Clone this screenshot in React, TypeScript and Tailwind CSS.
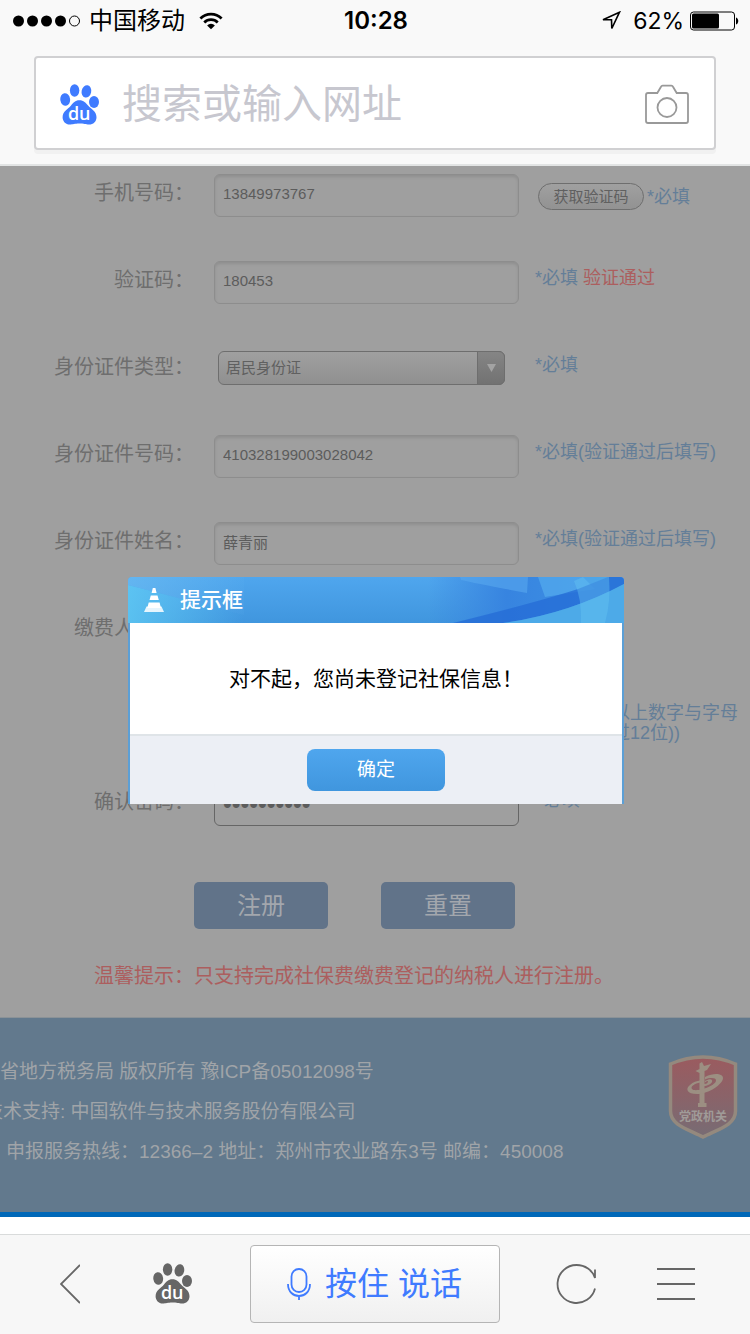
import type { ReactNode } from "react";

const SANS = "font-['Liberation_Sans','Noto_Sans_CJK_SC',sans-serif]";

const inputClass =
  "h-[43px] w-[305px] shrink-0 rounded-md border border-[#8d8d8d] bg-[#9f9f9f] px-2 pb-1 text-[15px] text-[#5c5c5c] shadow-[inset_0_2px_3px_rgba(0,0,0,0.1)] outline-none";

function Paw({ className }: { className: string }) {
  return (
    <svg className={className} viewBox="0 0 40 41" fill="currentColor" aria-hidden="true">
      <ellipse cx="5.2" cy="15.5" rx="4.9" ry="6.3" transform="rotate(-8 5.2 15.5)" />
      <ellipse cx="14.6" cy="6.5" rx="4.7" ry="6.2" />
      <ellipse cx="26.4" cy="7.4" rx="4.8" ry="6.2" transform="rotate(12 26.4 7.4)" />
      <ellipse cx="34" cy="18" rx="5" ry="6" />
      <path d="M19.3 16.2c4.500 0 6.500 2.500 9 5.500 2.700 3.200 8.200 5.500 8.200 11.500 0 4.500-3.200 7.300-7.500 7.300-3.400 0-5-1-9.700-1s-6.300 1-9.500 1c-4.200 0-7.200-3.300-7.200-7.300 0-6 5.700-8.300 8.200-11.500 2.200-3 4.500-5.500 8.500-5.500z" />
      <text
        x="19.200"
        y="36"
        textAnchor="middle"
        fill="#fff"
        fontSize="18"
        fontWeight="600"
        fontFamily="Open Sans, sans-serif"
      >
        du
      </text>
    </svg>
  );
}

function StatusBar() {
  return (
    <div className="grid h-[42px] grid-cols-[1fr_auto_1fr] items-center pr-[11px] pl-[13px] font-['Inter','Noto_Sans_CJK_SC',sans-serif] text-2xl text-black">
      <div className="flex items-center">
        <svg className="mr-2 h-3 w-[68px]" viewBox="0 0 68 12" aria-hidden="true">
          <circle cx="5.500" cy="6" r="5.500" />
          <circle cx="19.500" cy="6" r="5.500" />
          <circle cx="33.500" cy="6" r="5.500" />
          <circle cx="47.500" cy="6" r="5.500" />
          <circle cx="61.500" cy="6" r="5" fill="none" stroke="#000" />
        </svg>
        <span>中国移动</span>
        <svg className="ml-3.5 h-[18px] w-6" viewBox="0 0 26 19" fill="none" stroke="#000" aria-hidden="true">
          <path d="M1.500 6.700a16.500 16.500 0 0 1 23 0" strokeWidth="3" />
          <path d="M5.700 11a10.500 10.500 0 0 1 14.600 0" strokeWidth="3" />
          <path d="M13 18.500 8.800 14.300a6 6 0 0 1 8.400 0z" fill="#000" stroke="none" />
        </svg>
      </div>
      <span className="font-semibold">10:28</span>
      <div className="flex items-center justify-end">
        <svg className="mr-3 h-5 w-5" viewBox="0 0 20 20" fill="none" stroke="#000" strokeWidth="1.600" aria-hidden="true">
          <path d="M18.500 1.200 2 8.800h8.500l.300 8.700z" />
        </svg>
        <span className="text-[23px]">62%</span>
        <svg className="ml-1.5 h-5 w-[49px]" viewBox="0 0 49 20" aria-hidden="true">
          <rect x=".500" y="1" width="44" height="18" rx="3" fill="none" stroke="#000" />
          <rect x="2" y="2.500" width="27" height="15" rx="1.500" />
          <path d="M46 6.500c3 1 3 6 0 7z" />
        </svg>
      </div>
    </div>
  );
}

function SearchBar() {
  return (
    <div className="mx-[34px] mt-3.5 flex h-[94px] items-center rounded border-2 border-[#d0d0d2] bg-white pt-0.5 pr-[25px] pl-6 shadow-[0_4px_0_#f1f1f1]">
      <Paw className="h-[41px] w-10 shrink-0 text-[#3f7bff]" />
      <input
        type="text"
        aria-label="搜索或输入网址"
        placeholder="搜索或输入网址"
        className="mr-4 ml-[22px] h-16 min-w-0 flex-1 text-[40px] outline-none placeholder:text-[#c7c7cf]"
      />
      <button type="button" aria-label="拍照" className="shrink-0">
        <svg className="h-10 w-11" viewBox="0 0 44 40" fill="none" stroke="#999" strokeWidth="1.800" aria-hidden="true">
          <path d="M3 9h9.300l3.700-6.300q.500-1 1.600-1h8.800q1.100 0 1.600 1L31.700 9H41q2 0 2 2v26q0 2-2 2H3q-2 0-2-2V11q0-2 2-2z" />
          <circle cx="22" cy="23.500" r="9.500" />
        </svg>
      </button>
    </div>
  );
}

function Row({ label, id, children, hint }: { label: string; id: string; children: ReactNode; hint?: ReactNode }) {
  return (
    <div className="flex h-[43px]">
      <label htmlFor={id} className="w-[194px] shrink-0 text-right text-xl leading-[38px] text-[#6e6e6e]">
        {label}
      </label>
      <div className="ml-5 w-[305px] shrink-0">{children}</div>
      <div className="ml-4 min-w-0 flex-1 pt-[7px] text-lg leading-5 whitespace-nowrap text-[#647e98]">{hint}</div>
    </div>
  );
}

function Select({ id, value }: { id: string; value: string }) {
  return (
    <div className="relative mt-[3px] ml-1 h-[34px] w-[287px]">
      <select
        id={id}
        className="h-full w-full appearance-none rounded-md border border-[#6e6e6e] bg-linear-to-b from-[#a0a0a0] to-[#909090] px-[7px] text-[15px] text-[#606060] outline-none"
      >
        <option>{value}</option>
      </select>
      <span className="pointer-events-none absolute inset-y-0 right-0 flex w-7 items-center justify-center rounded-r-md border border-[#6e6e6e] bg-linear-to-b from-[#858585] to-[#727272]">
        <svg className="h-2 w-[9px]" viewBox="0 0 9 8" fill="#a3a3a3" aria-hidden="true">
          <path d="M0 0h9L4.500 8z" />
        </svg>
      </span>
    </div>
  );
}

function RegisterForm() {
  return (
    <form className="flex flex-col bg-[#9f9f9f] pt-2 pb-[26px]" onSubmit={(e) => e.preventDefault()}>
      <div className="flex flex-col gap-11">
        <Row
          id="phone"
          label="手机号码："
          hint={
            <div className="flex items-center gap-[3px] pt-0.5 pl-[3px]">
              <button
                type="button"
                className="h-[27px] w-[106px] rounded-full border border-[#6e6e6e] bg-linear-to-b from-[#a0a0a0] to-[#929292] text-[15px] leading-5 text-[#606060]"
              >
                获取验证码
              </button>
              <span>*必填</span>
            </div>
          }
        >
          <input id="phone" type="tel" defaultValue="13849973767" className={inputClass} />
        </Row>
        <Row
          id="code"
          label="验证码："
          hint={
            <>
              *必填 <span className="text-[#ac5e5e]">验证通过</span>
            </>
          }
        >
          <input id="code" type="text" defaultValue="180453" className={inputClass} />
        </Row>
        <Row id="id-type" label="身份证件类型：" hint="*必填">
          <Select id="id-type" value="居民身份证" />
        </Row>
        <Row id="id-number" label="身份证件号码：" hint="*必填(验证通过后填写)">
          <input id="id-number" type="text" defaultValue="410328199003028042" className={inputClass} />
        </Row>
        <Row id="id-name" label="身份证件姓名：" hint="*必填(验证通过后填写)">
          <input id="id-name" type="text" defaultValue="薛青丽" className={inputClass} />
        </Row>
        <Row id="payer" label="缴费人类型：" hint="*必填">
          <Select id="payer" value="个人" />
        </Row>
        <Row
          id="password"
          label="密码："
          hint={
            <>
              *必填(6位以上数字与字母
              <br />
              组合,不超过12位))
            </>
          }
        >
          <input id="password" type="password" defaultValue="abcd123456" className={inputClass} />
        </Row>
        <Row id="confirm" label="确认密码：" hint={<span className="pl-0.5">*必填</span>}>
          <input
            id="confirm"
            type="password"
            defaultValue="abcd123456"
            className="h-[43px] w-[305px] rounded-md border border-[#666] bg-[#9f9f9f] px-2 text-[25px] text-[#5c5c5c] outline-none"
          />
        </Row>
      </div>
      <div className="mt-14 ml-[194px] flex gap-[53px]">
        <button type="submit" className="h-[47px] w-[134px] rounded-[5px] bg-[#617389] text-2xl text-[#a3a7ad]">
          注册
        </button>
        <button type="reset" className="h-[47px] w-[134px] rounded-[5px] bg-[#617389] text-2xl text-[#a3a7ad]">
          重置
        </button>
      </div>
      <p className="mt-8 ml-[94px] text-xl leading-[30px] text-[#ac5e5e]">
        温馨提示：只支持完成社保费缴费登记的纳税人进行注册。
      </p>
    </form>
  );
}

function Badge() {
  return (
    <svg className="h-[84px] w-[70px] shrink-0" viewBox="0 0 70 84" role="img" aria-label="党政机关">
      <defs>
        <linearGradient id="shield" x1="0" y1="0" x2="0" y2="1">
          <stop offset="0" stopColor="#9b5b5f" />
          <stop offset=".5" stopColor="#8a6369" />
          <stop offset="1" stopColor="#776c74" />
        </linearGradient>
      </defs>
      <path
        d="M2.500 9Q35-5 67.500 9v47c0 14-17 18-32.500 26C19.500 74 2.500 70 2.500 56z"
        fill="url(#shield)"
        stroke="#94897e"
        strokeWidth="3.500"
      />
      <g fill="#9c8f82">
        <path d="M31.500 8.500 34 7l2 4 7-2-4 6-2.500 1v32h2v4h-8.500v-4h1.500V18l-4-2 4-2z" />
        <path d="M37 22c10-5 18-3 18 1 0 6-14 16-26 16-10 0-12-5-7-9 3-3 7-4 10-4.500v2c-5 1-10 4-8 6.500 3 4 24-3 24-8.500 0-3-6-3-11-1z" />
        <path d="M37 26c5-3 8-2 7 1-1 2-5 4-8 4v-2c3 0 4-1.500 4-2.500s-1-.500-3 .800z" />
      </g>
      <text
        x="35"
        y="66"
        textAnchor="middle"
        fontSize="12"
        fontWeight="700"
        fill="#a09b98"
        fontFamily="Noto Sans CJK SC, sans-serif"
      >
        党政机关
      </text>
    </svg>
  );
}

function SiteFooter() {
  return (
    <footer className="flex h-[200px] items-start justify-between overflow-hidden border-t border-b-[5px] border-t-[#8b9297] border-b-[#0068b8] bg-[#62798d] pt-[34px] pr-3">
      <div className="text-[19px] leading-10 whitespace-nowrap text-[#a0a4a8]">
        <p>省地方税务局 版权所有 豫ICP备05012098号</p>
        <p className="-ml-4">技术支持: 中国软件与技术服务股份有限公司</p>
        <p className="ml-1.5">申报服务热线：12366–2 地址：郑州市农业路东3号 邮编：450008</p>
      </div>
      <div className="pt-[3px]">
        <Badge />
      </div>
    </footer>
  );
}

function AlertDialog() {
  return (
    <div className="absolute inset-0 flex items-center justify-center pb-0.5 pl-0.5">
      <div role="alertdialog" aria-labelledby="alert-title" aria-describedby="alert-text" className="w-[496px]">
        <div className="relative flex h-[46px] items-center overflow-hidden rounded-t-sm bg-linear-to-b from-[#4fa6ee] to-[#4096de] pl-4 text-white">
          <svg className="absolute inset-0 h-full w-full" viewBox="0 0 496 46" preserveAspectRatio="none" aria-hidden="true">
            <defs>
              <linearGradient id="cyan" x1="0" y1="0" x2="1" y2="0">
                <stop offset="0" stopColor="#60cbf4" />
                <stop offset="1" stopColor="#60cbf4" stopOpacity="0" />
              </linearGradient>
              <linearGradient id="pale" x1="0" y1="0" x2="1" y2="0">
                <stop offset="0" stopColor="#6cbcf2" />
                <stop offset="1" stopColor="#6cbcf2" stopOpacity="0.1" />
              </linearGradient>
              <linearGradient id="deep" x1="0" y1="0" x2="1" y2="0">
                <stop offset="0" stopColor="#3b86e0" stopOpacity="0" />
                <stop offset=".4" stopColor="#3784e0" />
                <stop offset="1" stopColor="#3f94e4" />
              </linearGradient>
            </defs>
            <path d="M0 0h116v38L0 8z" fill="url(#pale)" opacity=".7" />
            <path d="M0 8 116 38v8H0z" fill="url(#cyan)" opacity=".8" />
            <path d="M300 0h196v46H300z" fill="url(#deep)" />
            <path d="M332 0h68l-1 16q-49-9-66-13z" fill="#58a8ee" opacity=".6" />
            <path d="M410 0h45l12 12-50 8z" fill="#58b0f0" opacity=".6" />
            <path d="M325 46Q410 25 450 12L480 0h16v7Q440 37 375 46z" fill="#246bd6" opacity=".75" />
            <path d="M375 46Q440 37 496 7v39z" fill="#4daae8" />
            <path d="M446 4q8 18 7 42h24q6-22 4-46h-26z" fill="#67c5f2" opacity=".4" />
          </svg>
          <svg className="relative h-6 w-5" viewBox="0 0 20 24" fill="#fff" aria-hidden="true">
            <path d="M8.800 0h2.600l1.200 5H7.600zM6.800 7.500h6.700l1.300 4.500H5.500zM4.700 14.500h10.900L17 20H3.300z" />
            <path d="M2.500 18.500h15L20 24H0z" opacity=".85" />
          </svg>
          <h2 id="alert-title" className="relative ml-4 text-[21px] font-medium">
            提示框
          </h2>
        </div>
        <div className="border-x-2 border-[#5b9fd6]">
          <p
            id="alert-text"
            className="flex h-[113px] items-center justify-center border-b-2 border-[#dfe4e8] bg-white text-[21px] text-black"
          >
            对不起，您尚未登记社保信息！
          </p>
          <div className="flex justify-center bg-[#eceff5] py-[13px]">
            <button
              type="button"
              className="h-[42px] w-[138px] rounded-lg bg-linear-to-b from-[#4fa6ee] to-[#4096de] text-[19px] text-white"
            >
              确定
            </button>
          </div>
        </div>
      </div>
    </div>
  );
}

function Toolbar() {
  return (
    <nav className="flex h-[100px] items-center justify-between border-t border-[#d9dbdb] bg-[#f7f7f7] pr-[55px] pb-0.5 pl-[60px] text-[#666]">
      <button type="button" aria-label="后退">
        <svg className="h-10 w-5" viewBox="0 0 20 40" fill="none" stroke="currentColor" strokeWidth="1.800" aria-hidden="true">
          <path d="M20 1 1 20l19 19" />
        </svg>
      </button>
      <button type="button" aria-label="首页" className="ml-4">
        <Paw className="h-[41px] w-10" />
      </button>
      <button
        type="button"
        className="flex h-[78px] w-[250px] items-center justify-center gap-3.5 rounded border border-[#b5b5b5] bg-linear-to-b from-white to-[#f0f0f0] text-[32px] text-[#3f7bff]"
      >
        <svg className="h-8 w-6" viewBox="0 0 24 32" fill="none" stroke="currentColor" strokeWidth="1.800" aria-hidden="true">
          <rect x="4.500" y="1" width="15" height="23" rx="7.500" />
          <path d="M1 16c0 16 22 16 22 0M12 28v4" />
        </svg>
        <span>按住 说话</span>
      </button>
      <button type="button" aria-label="刷新">
        <svg className="h-10 w-10" viewBox="0 0 40 40" fill="none" stroke="currentColor" strokeWidth="1.800" aria-hidden="true">
          <path d="M39 5.500V14C36.500 6 29 1 20.500 1A19 19 0 1 0 39 24.500" />
        </svg>
      </button>
      <button type="button" aria-label="菜单" className="ml-1">
        <svg className="h-8 w-[38px]" viewBox="0 0 38 32" stroke="currentColor" strokeWidth="2" aria-hidden="true">
          <path d="M0 1h38M0 16h38M0 31h38" />
        </svg>
      </button>
    </nav>
  );
}

export default function App() {
  return (
    <div className={`flex min-h-screen flex-col overflow-hidden bg-white ${SANS}`}>
      <header className="border-b-2 border-[#e2e4e4] bg-[#f9f9f9] pb-3.5">
        <StatusBar />
        <SearchBar />
      </header>
      <main className="relative">
        <RegisterForm />
        <SiteFooter />
        <AlertDialog />
      </main>
      <div className="flex-1" />
      <Toolbar />
    </div>
  );
}
